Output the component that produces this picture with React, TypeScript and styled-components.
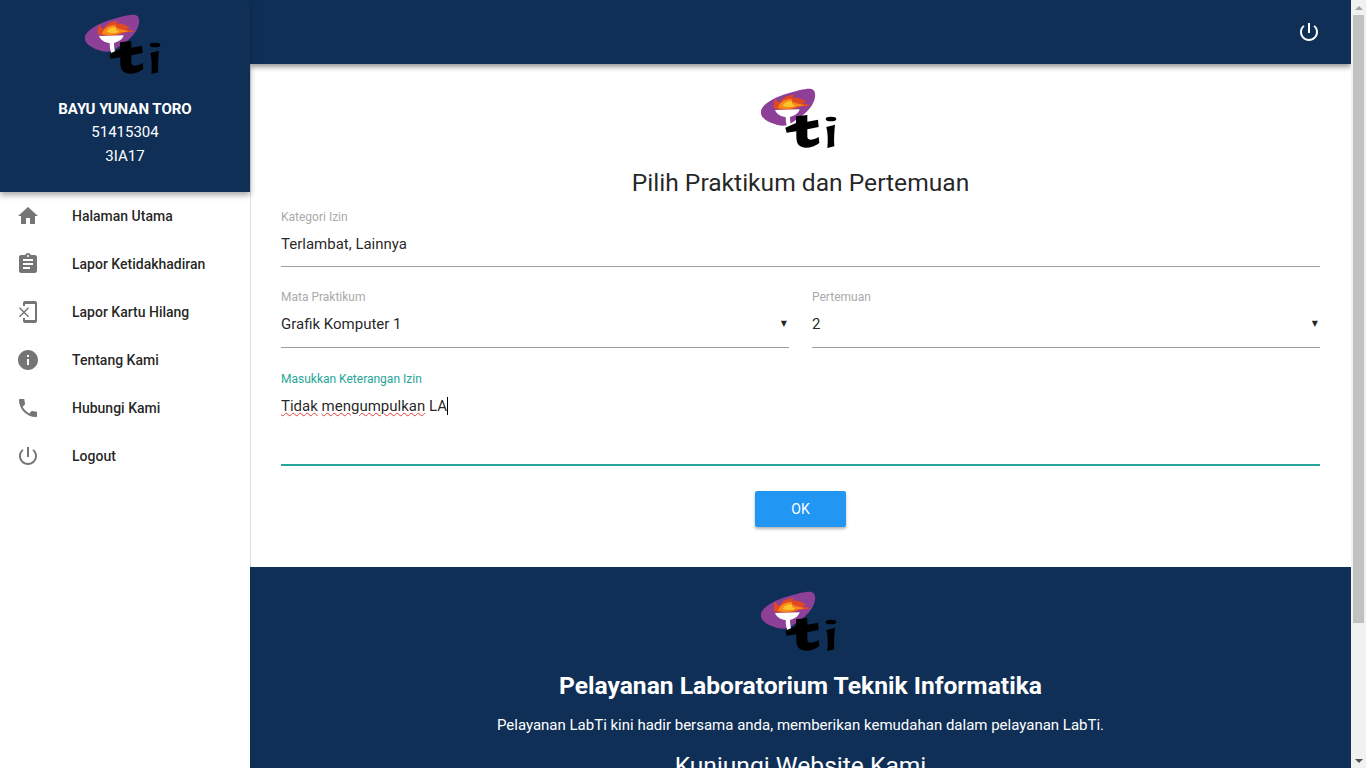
import React from "react";
import styled, { createGlobalStyle } from "styled-components";

const Global = createGlobalStyle`
  html, body { margin: 0; padding: 0; height: 100%; overflow: hidden; background: #fff; }
  * { box-sizing: border-box; }
  body { font-family: Roboto, "Liberation Sans", sans-serif; color: rgba(0,0,0,.87); }
`;

const navy = "#0f2f57";

const Shell = styled.div`display: flex; width: 1366px; height: 768px; overflow: hidden;`;
const Sidebar = styled.aside`width: 250px; flex: none; height: 100%; background: #fff; box-shadow: 1px 0 0 #e0e0e0; display: flex; flex-direction: column;`;
const Profile = styled.header`
  height: 192px; background: ${navy}; display: flex; flex-direction: column; align-items: center;
  padding-top: 14px; color: #fff; box-shadow: 0 3px 6px rgba(0,0,0,.35); position: relative; z-index: 2;
`;
const ProfileName = styled.div`font-size: 15px; font-weight: 700; line-height: 22px; margin-top: 24px;`;
const ProfileLine = styled.div`font-size: 15px; line-height: 24px;`;
const Nav = styled.nav`display: flex; flex-direction: column;`;
const NavItem = styled.a`display: flex; align-items: center; height: 48px; padding-left: 16px; font-size: 14px; font-weight: 500; color: rgba(0,0,0,.87);`;
const NavIcon = styled.svg`width: 24px; height: 24px; fill: #757575; margin-right: 32px; flex: none;`;

const Column = styled.div`flex: 1; min-width: 0; display: flex; flex-direction: column; height: 100%; overflow: hidden;`;
const TopBar = styled.div`height: 64px; flex: none; background: ${navy}; display: flex; align-items: center; justify-content: flex-end; padding-right: 30px; box-shadow: 0 3px 5px rgba(0,0,0,.4); position: relative; z-index: 1;`;
const TopIcon = styled.svg`width: 24px; height: 24px; fill: #fff;`;

const Content = styled.main`flex: none; height: 503px; padding: 24px 31px 0 31px; display: flex; flex-direction: column; align-items: stretch;`;
const LogoBox = styled.svg`width: 80px; height: 60px; display: block; flex: none;`;
const CenterLogo = styled.div`display: flex; justify-content: center;`;
const Heading = styled.h1`margin: 20px 0 0; font-size: 24.6px; font-weight: 400; line-height: 30px; text-align: center; color: rgba(0,0,0,.87);`;

const Field = styled.div`display: flex; flex-direction: column; flex: 1; min-width: 0;`;
const Label = styled.label<{ $active?: boolean }>`font-size: 12px; line-height: 14px; color: ${(p) => (p.$active ? "#26a69a" : "#aaa")};`;
const Value = styled.div`
  display: flex; justify-content: space-between; align-items: center;
  height: 43px; padding: 0 2px 2px 0;
  font-size: 15px; line-height: 24px; color: rgba(0,0,0,.87);
  border-bottom: 1px solid #9e9e9e;
`;
const SelectValue = styled(Value)`height: 44px; padding-bottom: 3px;`;
const AreaValue = styled(Value)`height: 80px; padding: 8px 0 0; align-items: flex-start; border-bottom: 2px solid #26a69a;`;
const TopField = styled(Field)`margin-top: 12px; flex: none;`;
const Row = styled.div`display: flex; gap: 23px; margin-top: 23px;`;
const TextField = styled(Field)`margin-top: 24px; flex: none;`;
const Arrow = styled.span`font-size: 8px; line-height: 24px; font-family: "DejaVu Sans", sans-serif;`;
const Misspelled = styled.span`text-decoration: underline wavy #e53935 1px; text-underline-offset: 1px;`;
const Caret = styled.span`display: inline-block; width: 1px; height: 18px; background: #000; vertical-align: -4px;`;
const Actions = styled.div`display: flex; justify-content: center; margin-top: 25px;`;
const OkButton = styled.button`width: 91px; height: 36px; border: 0; border-radius: 2px; background: #2196f3; color: #fff; font: 400 14px Roboto, sans-serif; box-shadow: 0 2px 3px rgba(0,0,0,.3);`;

const Footer = styled.footer`flex: 1; background: ${navy}; color: #fff; display: flex; flex-direction: column; align-items: center; padding-top: 24px; overflow: hidden;`;
const FooterTitle = styled.h2`margin: 19px 0 0; font-size: 24.6px; font-weight: 700; line-height: 32px;`;
const FooterText = styled.p`margin: 11px 0 0; font-size: 15px; line-height: 24px;`;
const FooterSub = styled.h3`margin: 13px 0 0; font-size: 24.6px; font-weight: 400; line-height: 32px; white-space: nowrap;`;

const Scrollbar = styled.div`width: 15px; flex: none; height: 100%; background: #f1f1f1; display: flex; flex-direction: column; align-items: center;`;
const ScrollEnd = styled.div`height: 15px; flex: none; display: flex; align-items: center; justify-content: center;`;
const ArrowUp = styled.div`width: 0; height: 0; border-left: 4px solid transparent; border-right: 4px solid transparent; border-bottom: 4px solid #a3a3a3;`;
const ArrowDown = styled.div`width: 0; height: 0; border-left: 4px solid transparent; border-right: 4px solid transparent; border-top: 4px solid #505050;`;
const Thumb = styled.div`width: 11px; height: 608px; background: #c1c1c1; flex: none;`;
const ScrollGap = styled.div`flex: 1;`;

const Logo = () => (
  <LogoBox viewBox="45 25 240 180" aria-hidden="true">
    <path d="M45 92C52 72 82 54 130 40C152 33 178 26 192 27C206 28 210 40 206 58C198 88 170 108 140 128C126 138 108 142 88 134C62 126 40 112 45 92Z" fill="#8e3f97" />
    <path d="M84 86C82 72 84 58 90 58C92 66 96 70 102 68C108 56 124 44 146 46C140 50 138 52 140 54C154 52 170 58 182 68C172 68 170 70 172 72C180 72 188 74 194 78C176 78 160 80 150 86C130 92 100 92 84 86Z" fill="#e04a20" />
    <path d="M96 84C100 70 116 56 138 58C134 64 140 68 158 72C168 74 172 76 176 78C156 78 148 82 140 86C124 89 108 88 96 84Z" fill="#f68a1e" />
    <path d="M110 78C116 68 128 62 138 66C136 72 142 76 148 78C138 82 122 84 110 78Z" fill="#fcc42c" />
    <path d="M87 91L161 89C158 102 142 110 132 112C132 124 134 134 136 142L124 142C120 132 119 122 119 112C104 110 92 104 87 91Z" fill="#fff" />
    <path d="M150 110L184 106L184 126L216 120L218 142L184 149L184 172C186 184 200 182 218 172L220 190C200 206 168 210 156 194C150 184 151 168 151 155L122 159L118 144L150 130Z" fill="#000" />
    <ellipse cx="255" cy="118" rx="16" ry="7" fill="#000" />
    <path d="M241 142L267 135C265 156 263 178 265 200L244 205C246 184 246 162 241 142Z" fill="#000" />
  </LogoBox>
);

const P = { power: "M13 3h-2v10h2V3zm4.83 2.17l-1.42 1.42C17.99 7.86 19 9.81 19 12c0 3.87-3.13 7-7 7s-7-3.13-7-7c0-2.19 1.01-4.14 2.58-5.42L6.17 5.17C4.23 6.82 3 9.26 3 12c0 4.97 4.03 9 9 9s9-4.03 9-9c0-2.74-1.23-5.18-3.17-6.83z" };

const items: [string, string][] = [
  ["Halaman Utama", "M10 20v-6h4v6h5v-8h3L12 3 2 12h3v8z"],
  ["Lapor Ketidakhadiran", "M19 3h-4.18C14.4 1.84 13.3 1 12 1c-1.3 0-2.4.84-2.82 2H5c-1.1 0-2 .9-2 2v14c0 1.1.9 2 2 2h14c1.1 0 2-.9 2-2V5c0-1.1-.9-2-2-2zm-7 0c.55 0 1 .45 1 1s-.45 1-1 1-1-.45-1-1 .45-1 1-1zm2 14H7v-2h7v2zm3-4H7v-2h10v2zm0-4H7V7h10v2z"],
  ["Lapor Kartu Hilang", "M13 8.2l-1-1-4 4-4-4-1 1 4 4-4 4 1 1 4-4 4 4 1-1-4-4 4-4zM19 1H9c-1.1 0-2 .9-2 2v3h2V4h10v16H9v-2H7v3c0 1.1.9 2 2 2h10c1.1 0 2-.9 2-2V3c0-1.1-.9-2-2-2z"],
  ["Tentang Kami", "M12 2C6.48 2 2 6.48 2 12s4.48 10 10 10 10-4.48 10-10S17.52 2 12 2zm1 15h-2v-6h2v6zm0-8h-2V7h2v2z"],
  ["Hubungi Kami", "M6.62 10.79c1.44 2.83 3.76 5.14 6.59 6.59l2.2-2.2c.27-.27.67-.36 1.02-.24 1.12.37 2.33.57 3.57.57.55 0 1 .45 1 1V20c0 .55-.45 1-1 1-9.39 0-17-7.61-17-17 0-.55.45-1 1-1h3.5c.55 0 1 .45 1 1 0 1.25.2 2.45.57 3.57.11.35.03.74-.25 1.02l-2.2 2.2z"],
  ["Logout", P.power],
];

export default function App() {
  return (
    <Shell>
      <Global />
      <Sidebar>
        <Profile>
          <Logo />
          <ProfileName>BAYU YUNAN TORO</ProfileName>
          <ProfileLine>51415304</ProfileLine>
          <ProfileLine>3IA17</ProfileLine>
        </Profile>
        <Nav>
          {items.map(([label, d]) => (
            <NavItem key={label}>
              <NavIcon viewBox="0 0 24 24"><path d={d} /></NavIcon>
              {label}
            </NavItem>
          ))}
        </Nav>
      </Sidebar>
      <Column>
        <TopBar>
          <TopIcon viewBox="0 0 24 24"><path d={P.power} /></TopIcon>
        </TopBar>
        <Content>
          <CenterLogo><Logo /></CenterLogo>
          <Heading>Pilih Praktikum dan Pertemuan</Heading>
          <TopField>
            <Label>Kategori Izin</Label>
            <Value>Terlambat, Lainnya</Value>
          </TopField>
          <Row>
            <Field>
              <Label>Mata Praktikum</Label>
              <SelectValue>Grafik Komputer 1<Arrow>▼</Arrow></SelectValue>
            </Field>
            <Field>
              <Label>Pertemuan</Label>
              <SelectValue>2<Arrow>▼</Arrow></SelectValue>
            </Field>
          </Row>
          <TextField>
            <Label $active>Masukkan Keterangan Izin</Label>
            <AreaValue>
              <span><Misspelled>Tidak</Misspelled> <Misspelled>mengumpulkan</Misspelled> LA<Caret /></span>
            </AreaValue>
          </TextField>
          <Actions><OkButton>OK</OkButton></Actions>
        </Content>
        <Footer>
          <Logo />
          <FooterTitle>Pelayanan Laboratorium Teknik Informatika</FooterTitle>
          <FooterText>Pelayanan LabTi kini hadir bersama anda, memberikan kemudahan dalam pelayanan LabTi.</FooterText>
          <FooterSub>Kunjungi Website Kami</FooterSub>
        </Footer>
      </Column>
      <Scrollbar>
        <ScrollEnd><ArrowUp /></ScrollEnd>
        <Thumb />
        <ScrollGap />
        <ScrollEnd><ArrowDown /></ScrollEnd>
      </Scrollbar>
    </Shell>
  );
}
